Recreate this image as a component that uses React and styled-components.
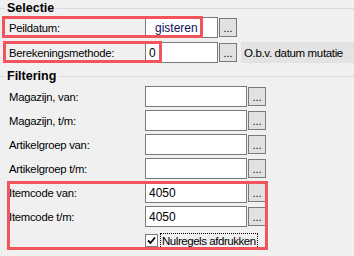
import styled, { createGlobalStyle } from "styled-components";

const GlobalStyle = createGlobalStyle`
  html, body {
    margin: 0;
    padding: 0;
    background: #f0f0f0;
  }
  body {
    font-family: "Liberation Sans", Arial, sans-serif;
    font-size: 11px;
    color: #000;
  }
`;

const Page = styled.div`
  width: 354px;
  height: 256px;
  overflow: hidden;
  background: #f0f0f0;
`;

const GroupTitle = styled.div`
  display: flex;
  align-items: center;
  height: 16px;
  margin-top: ${(p) => p.top || 0}px;
  font-size: 12.5px;
  font-weight: 700;

  &::before {
    content: "";
    width: 4px;
    height: 1px;
    background: #d5dbe3;
    margin-right: 3px;
  }

  &::after {
    content: "";
    flex: 1;
    height: 1px;
    background: #d5dbe3;
    margin-left: 3px;
  }
`;

const Rows = styled.div`
  display: flex;
  flex-direction: column;
  gap: ${(p) => p.gap}px;
  margin-top: ${(p) => p.top || 0}px;
  position: relative;
`;

const Row = styled.div`
  position: relative;
  display: flex;
  align-items: center;
  height: 21px;
`;

const Label = styled.span`
  width: 136px;
  padding-left: 9px;
  font-size: 11.3px;
  letter-spacing: -0.25px;
  white-space: nowrap;
`;

const Input = styled.div`
  box-sizing: border-box;
  width: ${(p) => p.w}px;
  height: 21px;
  background: #fff;
  border: 1px solid #7a7a7a;
  padding-left: ${(p) => p.pad || 3}px;
  display: flex;
  align-items: center;
  font-size: 12px;
  color: ${(p) => p.color || "#000"};
`;

const Dots = styled.div`
  box-sizing: border-box;
  width: 18px;
  height: 19px;
  margin-left: 1px;
  background: #e1e1e1;
  border: 1px solid #7a7a7a;
  display: flex;
  align-items: flex-end;
  justify-content: center;
  padding-bottom: 2px;
  font-size: 11px;
  line-height: 11px;
`;

const Info = styled.div`
  height: 21px;
  flex: 1;
  margin-left: 4px;
  background: #e3e3e3;
  display: flex;
  align-items: center;
  padding-left: 3px;
  font-size: 11.5px;
  letter-spacing: -0.35px;
`;

const Highlight = styled.div`
  position: absolute;
  left: ${(p) => p.x}px;
  top: ${(p) => p.y}px;
  width: ${(p) => p.w}px;
  height: ${(p) => p.h}px;
  box-sizing: border-box;
  border: 3px solid #f2545b;
  pointer-events: none;
`;

const CheckRow = styled.div`
  display: flex;
  align-items: center;
  height: 21px;
  padding-left: 145px;
`;

const Box = styled.div`
  box-sizing: border-box;
  width: 13px;
  height: 13px;
  background: #fff;
  border: 1px solid #7a7a7a;
  display: flex;
  align-items: center;
  justify-content: center;
`;

const CheckLabel = styled.span`
  box-sizing: border-box;
  margin-left: 2px;
  width: 98px;
  height: 16px;
  border: 1px dotted #000;
  padding-left: 1px;
  font-size: 11.5px;
  line-height: 14px;
  letter-spacing: -0.45px;
  white-space: nowrap;
`;

function Field({ label, width, value, pad, color }) {
  return (
    <>
      <Label>{label}</Label>
      <Input w={width} pad={pad} color={color}>
        {value}
      </Input>
      <Dots>...</Dots>
    </>
  );
}

export default function App() {
  return (
    <Page>
      <GlobalStyle />
      <GroupTitle>Selectie</GroupTitle>
      <Rows gap={4} top={1}>
        <Row>
          <Field label="Peildatum:" width={73} value="gisteren" pad={9} color="#12125a" />
          <Highlight x={2} y={-1} w={201} h={22} />
        </Row>
        <Row>
          <Field label="Berekeningsmethode:" width={73} value="0" />
          <Info>O.b.v. datum mutatie</Info>
          <Highlight x={3} y={-1} w={159} h={22} />
        </Row>
      </Rows>
      <GroupTitle top={5}>Filtering</GroupTitle>
      <Rows gap={3} top={2}>
        <Row>
          <Field label="Magazijn, van:" width={102} />
        </Row>
        <Row>
          <Field label="Magazijn, t/m:" width={102} />
        </Row>
        <Row>
          <Field label="Artikelgroep van:" width={102} />
        </Row>
        <Row>
          <Field label="Artikelgroep t/m:" width={102} />
        </Row>
        <Rows gap={3}>
          <Row>
            <Field label="Itemcode van:" width={102} value="4050" />
          </Row>
          <Row>
            <Field label="Itemcode t/m:" width={102} value="4050" />
          </Row>
          <CheckRow>
            <Box>
              <svg width="9" height="9" viewBox="0 0 9 9">
                <path d="M1 4.5 L3.5 7 L8 1.5" fill="none" stroke="#000" strokeWidth="1.8" />
              </svg>
            </Box>
            <CheckLabel>Nulregels afdrukken</CheckLabel>
          </CheckRow>
          <Highlight x={7} y={-1} w={261} h={69} />
        </Rows>
      </Rows>
    </Page>
  );
}
